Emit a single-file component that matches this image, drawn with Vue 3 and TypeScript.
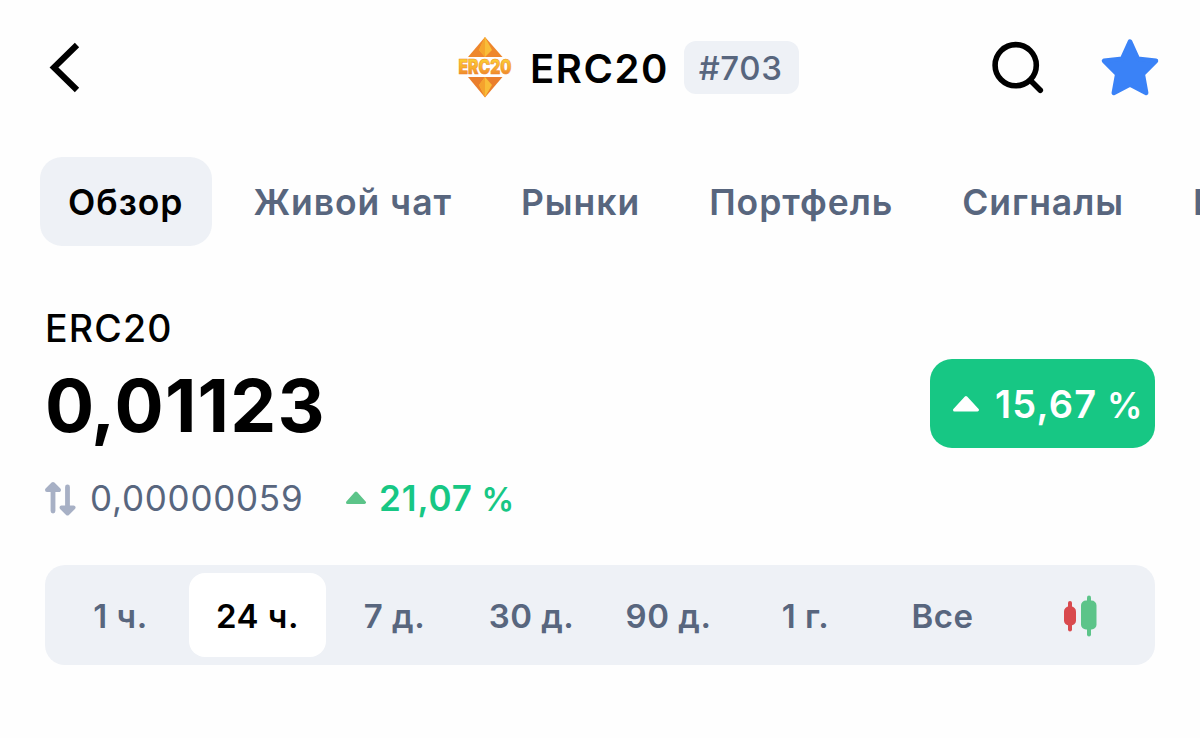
<script setup lang="ts">
import { ref } from 'vue'

const tabs: string[] = ['Обзор', 'Живой чат', 'Рынки', 'Портфель', 'Сигналы', 'Инфо']
const ranges: string[] = ['1 ч.', '24 ч.', '7 д.', '30 д.', '90 д.', '1 г.', 'Все']
const activeTab = ref<string>('Обзор')
const activeRange = ref<string>('24 ч.')
</script>

<template>
  <main class="screen">
    <header class="header">
      <button class="icon-btn back" aria-label="Назад">
        <svg width="34" height="56" viewBox="0 0 34 56">
          <path d="M30 5 L7 27.500 L30 50" fill="none" stroke="#000" stroke-width="6.200" />
        </svg>
      </button>
      <div class="coin">
        <svg class="logo" width="56" height="64" viewBox="0 0 56 64">
          <defs>
            <linearGradient id="word" x1="0" y1="0" x2="0" y2="1">
              <stop offset="0.2" stop-color="#fbcb33" />
              <stop offset="0.55" stop-color="#f7ab2c" />
              <stop offset="0.9" stop-color="#e9742f" />
            </linearGradient>
          </defs>
          <path d="M28 2 L45.500 22 H11 Z" fill="#ee862c" />
          <path d="M28 2 L35 15 L28 22 L22 15 Z" fill="#f9bd38" />
          <path d="M28 2 V22 L22 15 Z" fill="#f6a52d" />
          <path d="M11 42 H45.500 L28 62.500 Z" fill="#ea7e2c" />
          <path d="M28 42 L35 50 L28 62 L22 50 Z" fill="#f9bd38" />
          <path d="M28 42 V62 L22 50 Z" fill="#f5a22d" />
          <text class="logo-word" x="1.500" y="39.300" textLength="53" lengthAdjust="spacingAndGlyphs" fill="url(#word)" stroke="#ef8a2b" stroke-width="0.600">ERC20</text>
        </svg>
        <h1 class="coin-name">ERC20</h1>
        <span class="rank">#703</span>
      </div>
      <div class="actions">
        <button class="icon-btn" aria-label="Поиск">
          <svg width="56" height="60" viewBox="0 0 56 60">
            <circle cx="26.700" cy="27.200" r="20.600" fill="none" stroke="#000" stroke-width="5.600" />
            <path d="M41.500 42.500 L51.300 52.300" stroke="#000" stroke-width="5.600" stroke-linecap="round" />
          </svg>
        </button>
        <button class="icon-btn" aria-label="Избранное">
          <svg width="60" height="60" viewBox="0 0 60 60">
            <path
              d="M30 3.500 L37.800 20.700 L56 22.800 L42.800 36.200 L46.200 55 L30 46.500 L13.800 55 L17.200 36.200 L4 22.800 L22.200 20.700 Z"
              fill="#3a82f7" stroke="#3a82f7" stroke-width="4.500" stroke-linejoin="round"
            />
          </svg>
        </button>
      </div>
    </header>

    <nav class="tabs">
      <button
        v-for="tab in tabs" :key="tab" class="tab" :class="{ active: tab === activeTab }"
        @click="activeTab = tab"
      >{{ tab }}</button>
    </nav>

    <section class="quote">
      <div class="quote-main">
        <div class="label">ERC20</div>
        <div class="price"><span class="whole">0,</span><span>01123</span></div>
      </div>
      <div class="change-badge">
        <svg width="28" height="18" viewBox="0 0 28 18">
          <path d="M14 2.500 L25.500 15 H2.500 Z" fill="#fff" stroke="#fff" stroke-width="3" stroke-linejoin="round" />
        </svg>
        <span>15,67 <span class="percent">%</span></span>
      </div>
    </section>

    <section class="pair">
      <svg class="swap" width="32" height="36" viewBox="0 0 32 36">
        <g fill="#a7b0c5" stroke="#a7b0c5" stroke-linecap="round" stroke-linejoin="round">
          <path d="M8 10.500 V31" stroke-width="4.800" />
          <path d="M8 4 L14 10 H2 Z" stroke-width="4" />
          <path d="M22.500 7 V27.500" stroke-width="4.800" />
          <path d="M22.500 33.500 L28.500 27.500 H16.500 Z" stroke-width="4" />
        </g>
      </svg>
      <span class="pair-value">0,00000059</span>
      <svg class="up" width="22" height="14" viewBox="0 0 22 14">
        <path d="M11 2 L19.500 11.500 H2.500 Z" fill="#5cc489" stroke="#5cc489" stroke-width="3" stroke-linejoin="round" />
      </svg>
      <span class="pair-change">21,07 <span class="percent">%</span></span>
    </section>

    <div class="ranges">
      <button
        v-for="range in ranges" :key="range" class="range" :class="{ active: range === activeRange }"
        @click="activeRange = range"
      >{{ range }}</button>
      <button class="range" aria-label="Свечи">
        <svg width="34" height="42" viewBox="0 0 34 42">
          <g fill="#d94a4e">
            <rect x="5" y="6" width="4" height="30.500" rx="2" />
            <rect x="1" y="11.500" width="12" height="19" rx="5" />
          </g>
          <g fill="#5cc489">
            <rect x="24" y="0.500" width="4" height="41" rx="2" />
            <rect x="18" y="5.500" width="15.500" height="29" rx="5" />
          </g>
        </svg>
      </button>
    </div>
  </main>
</template>

<style>
body {
  margin: 0;
  background: #fff;
}
</style>

<style scoped>
.screen {
  box-sizing: border-box;
  width: 1200px;
  height: 738px;
  overflow: hidden;
  background: #fefefe;
  color: #000;
  font-family: Inter, "Liberation Sans", sans-serif;
}
button {
  margin: 0;
  padding: 0;
  border: 0;
  background: none;
  color: inherit;
  font: inherit;
}
svg {
  display: block;
  flex: none;
}
.header {
  display: grid;
  grid-template-columns: 410px auto 1fr;
  align-items: center;
  height: 136px;
  padding: 0 40px 0 47px;
}
.coin {
  display: flex;
  align-items: center;
  height: 64px;
}
.logo {
  margin: 0 17px 2px 0;
}
.logo-word {
  font-family: Inter, sans-serif;
  font-size: 20px;
  font-weight: 900;
}
.coin-name {
  margin: 0 15px 0 0;
  padding-top: 1px;
  font-size: 40px;
  line-height: 48px;
  font-weight: 600;
  letter-spacing: 1.6px;
}
.rank {
  box-sizing: border-box;
  width: 115px;
  height: 53px;
  margin-bottom: 2px;
  border-radius: 12px;
  background: #eef1f6;
  color: #58667e;
  font-size: 33px;
  font-weight: 500;
  line-height: 54px;
  letter-spacing: 0.6px;
  text-align: center;
  text-indent: -2px;
}
.actions {
  display: flex;
  justify-content: flex-end;
  gap: 55px;
}
.tabs {
  display: flex;
  gap: 13px;
  margin-top: 21px;
  padding-left: 40px;
}
.tab {
  flex: none;
  height: 89px;
  padding: 1px 28px 0;
  border-radius: 22px;
  color: #58667e;
  font-size: 35.5px;
  font-weight: 600;
  letter-spacing: 0.95px;
  white-space: nowrap;
}
.tab.active {
  padding-right: 29px;
  background: #eef1f6;
  color: #000;
}
.quote {
  display: flex;
  justify-content: space-between;
  align-items: flex-end;
  height: 142px;
  margin-top: 60px;
  padding: 0 45px;
}
.quote-main {
  align-self: flex-start;
}
.label {
  padding-top: 1px;
  font-size: 37.5px;
  font-weight: 500;
  line-height: 44px;
  letter-spacing: 1.2px;
}
.price {
  margin-top: 10px;
  font-size: 73px;
  font-weight: 700;
  line-height: 89px;
  letter-spacing: 1.2px;
}
.whole {
  letter-spacing: -1px;
}
.change-badge {
  display: flex;
  align-items: center;
  gap: 15px;
  box-sizing: border-box;
  width: 225px;
  height: 89px;
  padding-left: 22px;
  border-radius: 22px;
  background: #17c784;
  color: #fff;
  font-size: 38px;
  font-weight: 600;
  letter-spacing: 1.2px;
  word-spacing: -1px;
  white-space: nowrap;
}
.percent {
  font-size: 0.93em;
}
.pair {
  display: flex;
  align-items: center;
  height: 44px;
  margin-top: 28px;
  padding-left: 45px;
  font-size: 35px;
  line-height: 44px;
}
.pair-value {
  width: 214px;
  margin-left: 13px;
  color: #58667e;
  letter-spacing: 0.75px;
}
.up {
  margin-left: 41px;
}
.pair-change {
  margin-left: 12px;
  color: #17c784;
  font-weight: 600;
  letter-spacing: 0.9px;
  word-spacing: -1px;
}
.ranges {
  display: grid;
  grid-template-columns: repeat(8, 1fr);
  box-sizing: border-box;
  width: 1110px;
  height: 100px;
  margin: 45px 0 0 45px;
  padding: 8px 7px;
  border-radius: 20px;
  background: #eef1f6;
}
.range {
  display: flex;
  align-items: center;
  justify-content: center;
  padding-top: 1px;
  border-radius: 16px;
  color: #58667e;
  font-size: 33px;
  font-weight: 600;
  letter-spacing: 0.5px;
}
.range.active {
  background: #fff;
  color: #000;
}
</style>
